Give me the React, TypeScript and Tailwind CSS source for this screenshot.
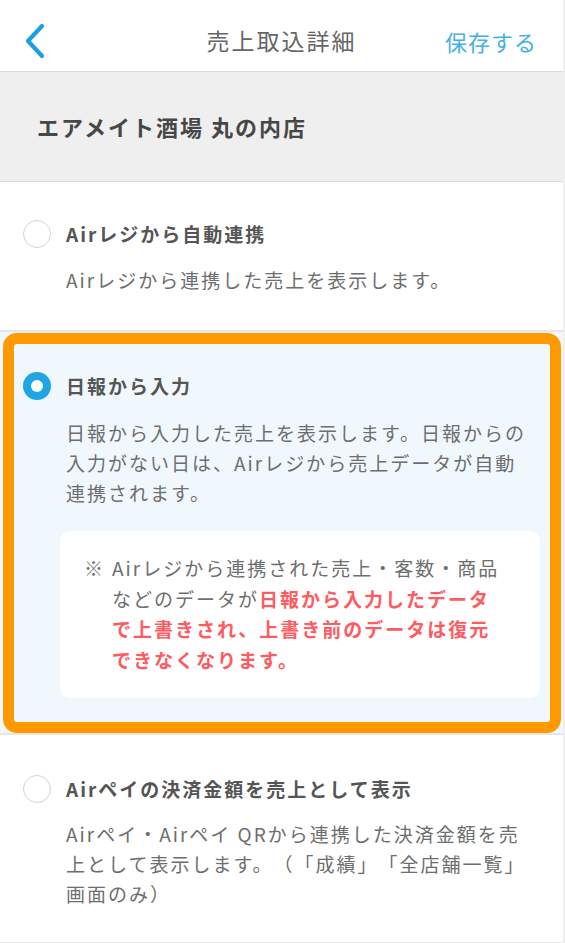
import React from "react";

const font = {
  fontFamily: '"Noto Sans CJK JP", "Noto Sans", sans-serif',
};

function Radio({ selected }: { selected?: boolean }) {
  if (selected) {
    return (
      <div className="w-[28px] h-[28px] rounded-full bg-[#1ea5e2] flex items-center justify-center shrink-0">
        <div className="w-[12px] h-[12px] rounded-full bg-white" />
      </div>
    );
  }
  return (
    <div className="w-[28px] h-[28px] rounded-full border-[1.5px] border-[#d3d3d3] bg-white shrink-0" />
  );
}

function OptionTitle({ selected, children }: { selected?: boolean; children: React.ReactNode }) {
  return (
    <div className="flex items-center h-[30px]">
      <div className="w-[66px] pl-[23px] flex items-center">
        <Radio selected={selected} />
      </div>
      <div className="text-[19px] leading-[30px] font-bold tracking-[2px] text-[#555555]">{children}</div>
    </div>
  );
}

function Desc({ children }: { children: React.ReactNode }) {
  return (
    <div className="pl-[66px] text-[19px] leading-[30px] tracking-[2px] text-[#6e6e6e] whitespace-nowrap">
      {children}
    </div>
  );
}

export default function App() {
  return (
    <div className="flex w-[565px] min-h-[943px] bg-[#efefef] [text-spacing-trim:space-all]" style={font}>
      <div className="w-[563px] bg-white flex flex-col">
        {/* Header */}
        <div className="h-[72px] pt-[10px] border-b border-[#dddddd] grid grid-cols-[1fr_auto_1fr] items-center">
          <div className="pl-[24px] flex items-center">
            <svg width="22" height="36" viewBox="0 0 22 36" fill="none">
              <polyline
                points="18,3 4,18 18,33"
                stroke="#1ba1e2"
                strokeWidth="4.2"
                strokeLinecap="round"
                strokeLinejoin="round"
              />
            </svg>
          </div>
          <div className="text-[23px] tracking-[2px] text-[#666666] leading-none">売上取込詳細</div>
          <div className="text-right pr-[26px] text-[22px] tracking-[1px] text-[#45b0e5] leading-none">保存する</div>
        </div>

        {/* Store */}
        <div className="h-[110px] bg-[#efefef] border-b border-[#dddddd] flex items-center pl-[37px]">
          <div className="text-[22px] font-bold tracking-[2px] text-[#474747]">エアメイト酒場 丸の内店</div>
        </div>

        {/* Option 1 */}
        <div className="pt-[37px] pb-[35px] border-b-2 border-[#e6e6e6]">
          <OptionTitle>Airレジから自動連携</OptionTitle>
          <div className="h-[16px]" />
          <Desc>Airレジから連携した売上を表示します。</Desc>
        </div>

        {/* Option 2 */}
        <div className="relative bg-[#f0f8fe] pt-[39px] pb-[35px]">
          <OptionTitle selected>日報から入力</OptionTitle>
          <div className="h-[17px]" />
          <Desc>
            日報から入力した売上を表示します。日報からの
            <br />
            入力がない日は、Airレジから売上データが自動
            <br />
            連携されます。
          </Desc>
          <div className="ml-[60px] mr-[23px] mt-[23px] bg-white rounded-[10px] pt-[22px] pb-[23px] pl-[24px] flex text-[19px] leading-[30.5px] tracking-[2px] text-[#6e6e6e] whitespace-nowrap">
            <div className="w-[28px] shrink-0">※</div>
            <div>
              Airレジから連携された売上・客数・商品
              <br />
              などのデータが
              <span className="text-[#ff5a5f] font-bold">日報から入力したデータ</span>
              <br />
              <span className="text-[#ff5a5f] font-bold">
                で上書きされ、上書き前のデータは復元
                <br />
                できなくなります。
              </span>
            </div>
          </div>
          <div className="absolute left-[3px] right-[2px] top-[1px] bottom-0 border-[11px] border-[#ff9900] rounded-[14px] pointer-events-none" />
        </div>

        {/* Option 3 */}
        <div className="pt-[39px] pb-[33px] border-t-2 border-b-2 border-[#e6e6e6]">
          <OptionTitle>Airペイの決済金額を売上として表示</OptionTitle>
          <div className="h-[15px]" />
          <Desc>
            Airペイ・Airペイ QRから連携した決済金額を売
            <br />
            上として表示します。（「成績」「全店舗一覧」
            <br />
            画面のみ）
          </Desc>
        </div>
        <div className="flex-1 bg-white" />
      </div>
    </div>
  );
}
